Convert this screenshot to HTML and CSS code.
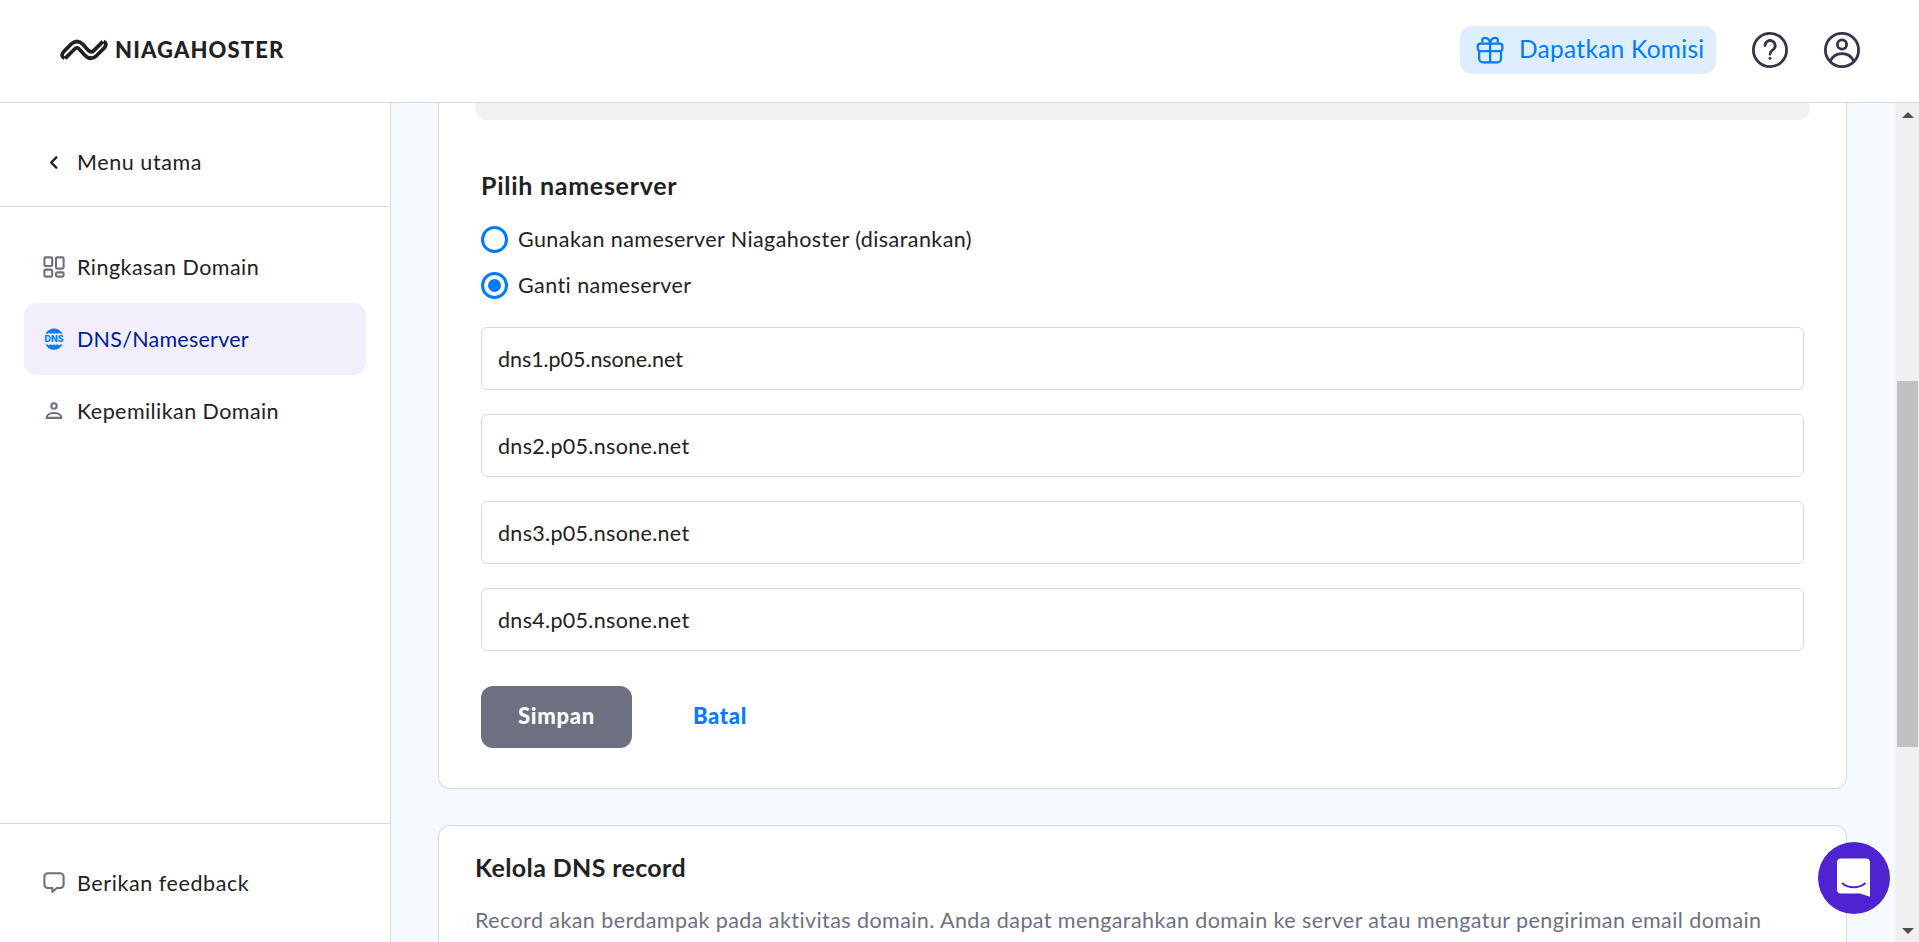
FILE: index.html
```html
<!DOCTYPE html>
<html lang="id">
<head>
<meta charset="utf-8">
<title>Niagahoster - DNS/Nameserver</title>
<link rel="stylesheet" href="styles.css">
</head>
<body>
<header class="topbar">
  <a class="logo">
    <svg width="48" height="22" viewBox="0 0 48 22" fill="none" stroke="#1f2124" stroke-width="3.700" stroke-linejoin="round">
      <path d="M5.200 19.400 L14.400 10.200 Q17 7.600 19.600 10.400 L24.600 16 Q30.400 22 36.400 16.800 L44.200 9 Q48 4.400 43.600 2.400"/>
      <path d="M42.800 2.600 L33.800 11.600 Q31.200 14.200 28.400 11.400 L23 5.400 Q17.400 0 11.600 4.600 L3.600 12.800 Q0 17.400 4.600 19.400"/>
    </svg>
    <span class="logo-text">NIAGAHOSTER</span>
  </a>
  <nav class="actions">
    <a class="komisi">
      <svg width="28" height="28" viewBox="0 0 28 28" fill="none" stroke="#007bff" stroke-width="2.200">
        <rect x="1.800" y="7.600" width="24.600" height="7.600" rx="2.600"/>
        <path d="M3.200 15.200v7.600a3.600 3.600 0 0 0 3.600 3.600h14.600a3.600 3.600 0 0 0 3.600-3.600v-7.600M14.100 7.600v18.800M14.100 7.400C13.600 4 11.800 1.800 9 1.800 6.200 1.800 5.400 4.600 7 6.600M14.100 7.400c.5-3.400 2.300-5.600 5.100-5.600 2.800 0 3.600 2.800 2 4.800"/>
      </svg>
      <span class="komisi-text">Dapatkan Komisi</span>
    </a>
    <svg width="36" height="36" viewBox="0 0 36 36" fill="none" stroke="#36344d" stroke-width="2.800">
      <circle cx="18" cy="18" r="16.600"/>
      <path d="M13 13.600a5.100 5.100 0 1 1 8.400 3.900c-2 1.500-3.400 2.200-3.400 4.700" stroke-linecap="round"/>
      <circle cx="18" cy="26.300" r="1.500" fill="#36344d" stroke="none"/>
    </svg>
    <svg width="36" height="36" viewBox="0 0 36 36" fill="none" stroke="#36344d" stroke-width="2.800">
      <circle cx="18" cy="18" r="16.600"/>
      <circle cx="18" cy="12.500" r="4.600"/>
      <path d="M6.300 29.200C8.600 23.800 13 21.600 18 21.600s9.400 2.200 11.700 7.600"/>
    </svg>
  </nav>
</header>
<div class="body">
  <aside class="sidebar">
    <div class="side-head">
      <a class="item">
        <svg class="icon" width="24" height="24" viewBox="0 0 24 24" fill="none" stroke="#1f2124" stroke-width="2.400" stroke-linecap="round" stroke-linejoin="round"><path d="M14.300 7.300 9.200 12.500l5.100 5.100"/></svg>
        <span class="t-menu">Menu utama</span>
      </a>
    </div>
    <nav class="side-nav">
      <a class="item">
        <svg class="icon" width="24" height="24" viewBox="0 0 24 24" fill="none" stroke="#6d7081" stroke-width="2.100"><rect x="2.400" y="2.400" width="7.800" height="8.600" rx="1.300"/><rect x="14" y="2.400" width="7.600" height="11.200" rx="1.300"/><rect x="2.400" y="14.600" width="7.800" height="7" rx="1.300"/><rect x="14" y="17.400" width="7.600" height="4.200" rx="1.300"/></svg>
        <span class="t-ring">Ringkasan Domain</span>
      </a>
      <a class="item active">
        <svg class="icon" width="24" height="24" viewBox="0 0 24 24"><path d="M3.500 6.800C5.400 3.400 8.500 1.400 12 1.400s6.600 2 8.500 5.400h-2.300l-1.100-1-1.100 1h-1.300l-1-1-1 1h-1.400l-1-1-1 1H8l-1.100-1-1.100 1zM3.500 17.400h2.300l1.100 1 1.100-1h1.300l1 1 1-1h1.400l1 1 1-1H16l1.100 1 1.100-1h2.300c-1.900 3.400-5 5.400-8.500 5.400s-6.600-2-8.500-5.400z" fill="#007bff"/><text class="dns-mark" x="12" y="15.200" text-anchor="middle">DNS</text></svg>
        <span class="t-dns">DNS/Nameserver</span>
      </a>
      <a class="item">
        <svg class="icon" width="24" height="24" viewBox="0 0 24 24" fill="none" stroke="#6d7081" stroke-width="2.100" stroke-linejoin="round"><circle cx="12" cy="7" r="2.700"/><path d="M4.600 18.900c0-3 3.400-4.900 7.400-4.900s7.400 1.900 7.400 4.900z"/></svg>
        <span class="t-kep">Kepemilikan Domain</span>
      </a>
    </nav>
    <div class="side-foot">
      <a class="item">
        <svg class="icon" width="24" height="24" viewBox="0 0 24 24" fill="none" stroke="#6d7081" stroke-width="2.100" stroke-linejoin="round"><path d="M5.800 2.200h12.400a3.400 3.400 0 0 1 3.400 3.400v8a3.400 3.400 0 0 1-3.400 3.400h-3.400l-4.400 4V17H5.800a3.400 3.400 0 0 1-3.400-3.400v-8a3.400 3.400 0 0 1 3.400-3.400z"/></svg>
        <span class="t-feed">Berikan feedback</span>
      </a>
    </div>
  </aside>
  <main class="main">
    <section class="card ns-card">
      <div class="strip"></div>
      <div class="ns-form">
        <h2 class="title t-pilih">Pilih nameserver</h2>
        <label class="radio"><span class="dot"></span><span class="radio-text">Gunakan nameserver Niagahoster (disarankan)</span></label>
        <label class="radio"><span class="dot checked"></span><span class="radio-text">Ganti nameserver</span></label>
        <div class="fields">
          <div class="field first">dns1.p05.nsone.net</div>
          <div class="field">dns2.p05.nsone.net</div>
          <div class="field">dns3.p05.nsone.net</div>
          <div class="field">dns4.p05.nsone.net</div>
        </div>
        <div class="buttons">
          <button class="btn save"><span>Simpan</span></button>
          <button class="btn cancel"><span>Batal</span></button>
        </div>
      </div>
    </section>
    <section class="card dns-card">
      <h2 class="title t-kelola">Kelola DNS record</h2>
      <p class="desc">Record akan berdampak pada aktivitas domain. Anda dapat mengarahkan domain ke server atau mengatur pengiriman email domain</p>
    </section>
  </main>
  <div class="scrollbar">
    <svg width="12" height="6" viewBox="0 0 12 6"><path d="M0 6 6 0l6 6z" fill="#505050"/></svg>
    <div class="thumb"></div>
    <svg class="down" width="12" height="6" viewBox="0 0 12 6"><path d="M0 0l6 6 6-6z" fill="#505050"/></svg>
  </div>
</div>
<div class="chat">
  <svg width="36" height="40" viewBox="0 0 36 40"><path d="M5 .5h25a4 4 0 0 1 4 4V38.800l-10-3.300H5a4 4 0 0 1-4-4v-27a4 4 0 0 1 4-4z" fill="#fff"/><path d="M6.500 25.500c6.500 5 15.800 5 22.500 0" fill="none" stroke="#4f22d2" stroke-width="2" stroke-linecap="round"/></svg>
</div>
</body>
</html>
```

FILE: styles.css
```css
* { box-sizing: border-box; }
body {
  margin: 0;
  height: 942px;
  overflow: hidden;
  display: flex;
  flex-direction: column;
  font-family: Lato, "Open Sans", sans-serif;
  font-size: 21.5px;
  line-height: 26px;
  color: #1f2124;
  background: #fff;
}
svg { display: block; flex: none; }

/* Top bar */
.topbar {
  flex: none;
  height: 103px;
  padding: 0 59px 3px 60px;
  border-bottom: 1px solid #d8dadc;
  display: flex;
  align-items: center;
  justify-content: space-between;
}
.logo { display: flex; align-items: center; gap: 7px; }
.logo-text { font-size: 22px; font-weight: 900; letter-spacing: 1.13px; white-space: nowrap; padding-top: 1px; }
.actions { display: flex; align-items: center; gap: 36px; }
.komisi {
  width: 256px;
  height: 48px;
  padding-left: 16px;
  border-radius: 12px;
  background: #dfeeff;
  color: #007bff;
  display: flex;
  align-items: center;
  gap: 15px;
}
.komisi-text { font-size: 24.5px; letter-spacing: .28px; padding-bottom: 2px; white-space: nowrap; }

/* Sidebar */
.body { flex: 1; min-height: 0; display: flex; }
.sidebar {
  flex: none;
  width: 391px;
  border-right: 1px solid #d8dadc;
  display: flex;
  flex-direction: column;
}
.side-head { padding: 23px 24px 8px; border-bottom: 1px solid #d8dadc; }
.side-nav { flex: 1; padding: 24px 24px 0; }
.side-foot { height: 119px; padding: 23px 24px; border-top: 1px solid #d8dadc; }
.item {
  height: 72px;
  padding-left: 18px;
  display: flex;
  align-items: center;
  gap: 11px;
  border-radius: 12px;
  white-space: nowrap;
}
.active { background: #f3eefc; color: #001d99; }
.t-menu { letter-spacing: .58px; }
.t-ring { letter-spacing: .47px; }
.t-dns { letter-spacing: .25px; }
.t-kep { letter-spacing: .43px; }
.t-feed { letter-spacing: .58px; }
.dns-mark { font: 800 8.8px Inter, sans-serif; fill: #007bff; }

/* Content */
.main {
  flex: 1;
  min-width: 0;
  padding: 0 48px 0 47px;
  background: #f4faff;
  display: flex;
  flex-direction: column;
  gap: 36px;
}
.card { border: 1px solid #d8dadc; background: #fff; }
.ns-card { flex: none; height: 686px; border-top: 0; border-radius: 0 0 12px 12px; padding: 0 36px; }
.strip { height: 17px; background: #f1f2f6; border-radius: 0 0 12px 12px; }
.ns-form { padding: 50px 6px 0; }
.title { margin: 0; font-size: 25px; line-height: 30px; font-weight: 700; white-space: nowrap; }
.t-pilih { letter-spacing: .73px; margin-bottom: 25px; }
.radio { display: flex; align-items: center; gap: 10px; height: 28px; margin-bottom: 18px; }
.radio-text { letter-spacing: .43px; padding-bottom: 1px; white-space: nowrap; }
.dot {
  flex: none;
  width: 27px;
  height: 27px;
  border: 3px solid #007bff;
  border-radius: 50%;
  display: grid;
  place-items: center;
}
.checked::after { content: ""; width: 13px; height: 13px; border-radius: 50%; background: #007bff; }
.fields { display: grid; gap: 24px; padding-top: 10px; }
.field {
  height: 63px;
  padding-left: 16px;
  border: 1px solid #d8dadc;
  border-radius: 6px;
  display: flex;
  align-items: center;
  letter-spacing: .31px;
}
.first { letter-spacing: -.06px; }
.buttons { display: flex; gap: 26px; padding-top: 35px; }
.btn {
  height: 62px;
  padding: 0 0 2px;
  border: 0;
  border-radius: 12px;
  font: 900 22px/26px Lato, sans-serif;
}
.save { width: 151px; background: #6d7081; color: #fff; letter-spacing: .7px; }
.cancel { width: 124px; background: none; color: #007bff; letter-spacing: .7px; }
.dns-card { flex: 1; min-height: 0; border-bottom: 0; border-radius: 12px 12px 0 0; padding: 26px 36px 0; }
.t-kelola { letter-spacing: .36px; }
.desc { margin: 25px 0 0; color: #6d7081; letter-spacing: .421px; white-space: nowrap; }

/* Scrollbar */
.scrollbar {
  flex: none;
  width: 24px;
  padding: 9px 1px 8px 2px;
  background: #f0f0f0;
  display: flex;
  flex-direction: column;
  align-items: center;
}
.thumb { width: 21px; height: 366px; margin-top: 263px; background: #c1c1c1; }
.down { margin-top: auto; }

.chat {
  position: absolute;
  left: 1818px;
  top: 842px;
  width: 72px;
  height: 72px;
  border-radius: 50%;
  background: #4f22d2;
  display: grid;
  place-items: center;
}
```
